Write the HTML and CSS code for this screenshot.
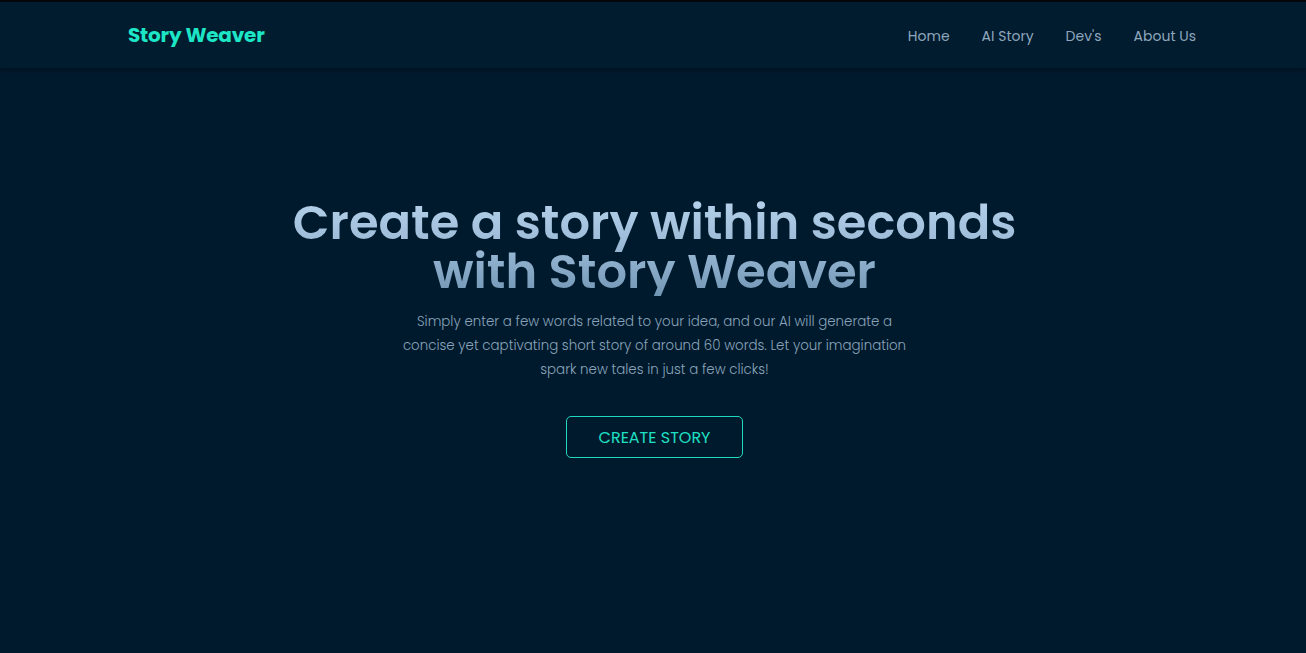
FILE: index.html
```html
<!DOCTYPE html>
<html lang="en">
<head>
<meta charset="utf-8">
<title>Story Weaver</title>
<link rel="stylesheet" href="styles.css">
</head>
<body>
<header class="topbar">
  <a class="logo" href="#">Story Weaver</a>
  <nav class="nav">
    <a href="#">Home</a>
    <a href="#">AI Story</a>
    <a href="#">Dev's</a>
    <a href="#">About Us</a>
  </nav>
</header>
<main class="hero">
  <h1 class="title">Create a story within seconds<br>with Story Weaver</h1>
  <p class="lead">Simply enter a few words related to your idea, and our AI will generate a concise yet captivating short story of around 60 words. Let your imagination spark new tales in just a few clicks!</p>
  <a class="cta" href="#">CREATE STORY</a>
</main>
</body>
</html>
```
FILE: styles.css
```css
* { box-sizing: border-box; }
html, body { margin: 0; height: 100%; }
body {
  background: #001a2d;
  font-family: "Poppins", Inter, "Noto Sans", sans-serif;
  border-top: 2px solid #03070c;
  overflow: hidden;
}
a { text-decoration: none; }
.topbar {
  height: 66px;
  display: flex;
  align-items: center;
  justify-content: space-between;
  padding: 0 110px 0 128px;
  background: #011b2f;
  box-shadow: 0 2px 4px rgba(0, 10, 20, 0.5);
}
.logo {
  color: #1de6c6;
  font-weight: 700;
  font-size: 20px;
  letter-spacing: -0.2px;
}
.nav { display: flex; gap: 32px; padding-top: 2px; }
.nav a {
  color: #8ea7bd;
  font-size: 14px;
}
.hero {
  display: flex;
  flex-direction: column;
  align-items: center;
  text-align: center;
  padding-top: 130px;
  padding-left: 3px;
}
.title {
  margin: 0;
  font-size: 48px;
  line-height: 49px;
  font-weight: 600;
  background: linear-gradient(180deg, #b6d2ec 0%, #9ab9d6 50%, #7196b4 100%);
  -webkit-background-clip: text;
  background-clip: text;
  color: transparent;
}
.lead {
  margin: 14px 0 0;
  width: 512px;
  font-size: 13.4px;
  font-weight: 300;
  line-height: 24px;
  color: #8aa3ba;
}
.cta {
  margin-top: 34px;
  width: 177px;
  height: 42px;
  display: flex;
  align-items: center;
  justify-content: center;
  border: 1px solid #1fd8bd;
  border-radius: 5px;
  color: #1fe0c4;
  font-size: 16px;
  font-weight: 400;
}
```
